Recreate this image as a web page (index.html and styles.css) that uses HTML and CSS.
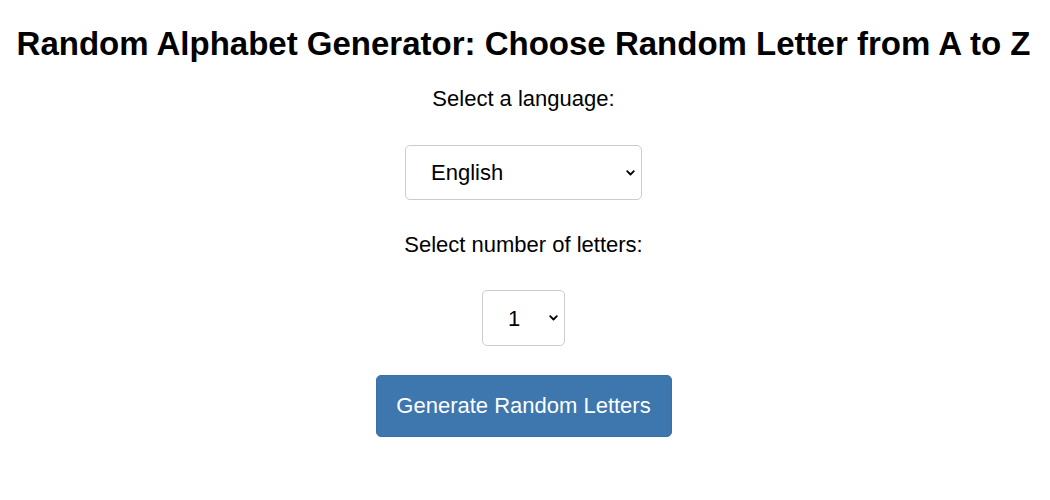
FILE: index.html
```html
<!DOCTYPE html>
<html lang="en">
<head>
<meta charset="utf-8">
<title>Random Alphabet Generator</title>
<link rel="stylesheet" href="styles.css">
</head>
<body>
<main class="page">
  <h1 class="title">Random Alphabet Generator: Choose Random Letter from A to Z</h1>
  <label class="label label-lang" for="lang">Select a language:</label>
  <div class="select-wrap wrap-lang">
    <select id="lang" class="select select-lang">
      <option>English</option>
      <option>Spanish</option>
      <option>French</option>
      <option>German</option>
    </select>
    <svg class="chev" width="9" height="6" viewBox="0 0 9 6" aria-hidden="true"><path d="M1.2 1.2 L4.5 4.5 L7.8 1.2" fill="none" stroke="#000" stroke-width="1.8" stroke-linecap="round" stroke-linejoin="round"/></svg>
  </div>
  <label class="label label-count" for="count">Select number of letters:</label>
  <div class="select-wrap wrap-count">
    <select id="count" class="select select-count">
      <option>1</option>
      <option>2</option>
      <option>3</option>
      <option>4</option>
      <option>5</option>
    </select>
    <svg class="chev" width="9" height="6" viewBox="0 0 9 6" aria-hidden="true"><path d="M1.2 1.2 L4.5 4.5 L7.8 1.2" fill="none" stroke="#000" stroke-width="1.8" stroke-linecap="round" stroke-linejoin="round"/></svg>
  </div>
  <button class="btn" type="button">Generate Random Letters</button>
</main>
</body>
</html>
```
FILE: styles.css
```css
html, body {
  margin: 0;
  background: #ffffff;
}
body {
  font-family: "Liberation Sans", Arial, sans-serif;
  color: #000;
}
.page {
  display: flex;
  flex-direction: column;
  align-items: center;
  padding: 0 3px 0 0;
}
.title {
  margin: 25px 0 0;
  font-size: 33px;
  line-height: 38px;
  font-weight: bold;
  text-align: center;
  white-space: nowrap;
}
.label {
  display: block;
  font-size: 22px;
  line-height: 25px;
}
.label-lang {
  margin-top: 23px;
}
.label-count {
  margin-top: 32px;
}
.select-wrap {
  position: relative;
  display: flex;
}
.wrap-lang {
  margin-top: 34px;
}
.wrap-count {
  margin-top: 33px;
}
.select {
  appearance: none;
  -webkit-appearance: none;
  box-sizing: border-box;
  font-family: "Liberation Sans", Arial, sans-serif;
  font-size: 22px;
  color: #000;
  background: #fff;
  border: 1px solid #cccccc;
  border-radius: 5px;
  padding: 0 20px 0 25px;
  margin: 0;
}
.select-lang {
  width: 237px;
  height: 55px;
}
.select-count {
  width: 83px;
  height: 56px;
}
.chev {
  position: absolute;
  right: 7px;
  top: 50%;
  margin-top: -3px;
  pointer-events: none;
}
.btn {
  margin-top: 29px;
  box-sizing: border-box;
  width: 296px;
  height: 62px;
  font-family: "Liberation Sans", Arial, sans-serif;
  font-size: 22px;
  color: #ffffff;
  background: #3e76ae;
  border: 1px solid #3a70a6;
  border-radius: 5px;
  cursor: pointer;
}
```
